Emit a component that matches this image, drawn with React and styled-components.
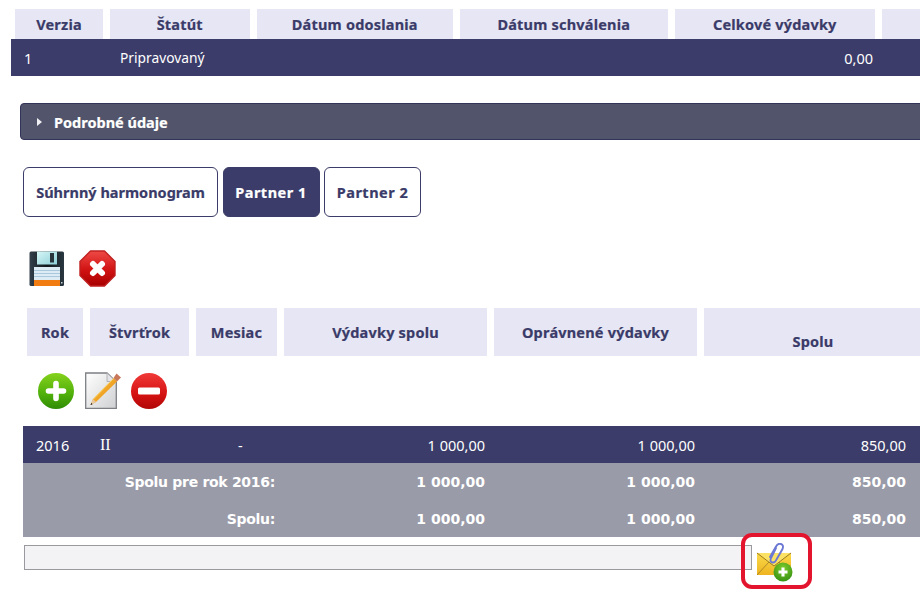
import React from 'react';
import styled, { createGlobalStyle } from 'styled-components';

const GlobalStyle = createGlobalStyle`
  html, body {
    margin: 0;
    padding: 0;
    background: #ffffff;
    overflow: hidden;
  }
  body {
    font-family: 'Noto Sans', Tahoma, sans-serif;
    font-size: 14.5px;
  }
`;

const SaveIcon = () => (
  <svg width="36" height="36" viewBox="0 0 36 36">
    <defs>
      <linearGradient id="saveBody" x1="0" y1="0" x2="1" y2="0">
        <stop offset="0" stopColor="#33404a" />
        <stop offset="0.5" stopColor="#10171c" />
        <stop offset="1" stopColor="#2b3841" />
      </linearGradient>
      <linearGradient id="saveShutter" x1="0" y1="0" x2="1" y2="1">
        <stop offset="0" stopColor="#d6f6f6" />
        <stop offset="1" stopColor="#8fd0d8" />
      </linearGradient>
    </defs>
    <path d="M2 0.5H33.5Q35 0.5 35 2V33.5Q35 35 33.5 35H2Q0.5 35 0.5 33.5V2Q0.5 0.5 2 0.5Z" fill="url(#saveBody)" />
    <rect x="8" y="0.5" width="20" height="13" fill="url(#saveShutter)" />
    <rect x="21" y="2" width="4" height="9.5" fill="#27343c" />
    <rect x="5" y="16" width="26" height="13" fill="#dcebf4" />
    <path d="M5 19.5H31M5 22.5H31M5 25.5H31" stroke="#a9c8dc" strokeWidth="1" />
    <rect x="5" y="29" width="26" height="6" fill="#f07c12" />
    <rect x="32" y="31" width="1.5" height="1.5" fill="#c8d0d4" />
  </svg>
);

const StopIcon = () => (
  <svg width="37" height="37" viewBox="0 0 37 37">
    <defs>
      <linearGradient id="stopFill" x1="0" y1="0" x2="0" y2="1">
        <stop offset="0" stopColor="#ee4a46" />
        <stop offset="0.55" stopColor="#d01212" />
        <stop offset="1" stopColor="#a80000" />
      </linearGradient>
    </defs>
    <path d="M11.5 1H25.5L36 11.5V25.5L25.5 36H11.5L1 25.5V11.5Z" fill="url(#stopFill)" stroke="#c02020" strokeWidth="1.4" strokeLinejoin="round" />
    <path d="M14 14L23 23M23 14L14 23" stroke="#ffffff" strokeWidth="6" strokeLinecap="round" />
  </svg>
);

const PlusIcon = () => (
  <svg width="36" height="36" viewBox="0 0 36 36">
    <defs>
      <linearGradient id="plusFill" x1="0" y1="0" x2="0" y2="1">
        <stop offset="0" stopColor="#84d21c" />
        <stop offset="0.6" stopColor="#4eae0a" />
        <stop offset="1" stopColor="#2f8c06" />
      </linearGradient>
    </defs>
    <circle cx="18" cy="18" r="18" fill="url(#plusFill)" />
    <path d="M18 10.5V25.5M10.5 18H25.5" stroke="#ffffff" strokeWidth="5.6" strokeLinecap="round" />
  </svg>
);

const MinusIcon = () => (
  <svg width="36" height="36" viewBox="0 0 36 36">
    <defs>
      <linearGradient id="minusFill" x1="0" y1="0" x2="0" y2="1">
        <stop offset="0" stopColor="#f03a38" />
        <stop offset="0.6" stopColor="#d41212" />
        <stop offset="1" stopColor="#b00606" />
      </linearGradient>
    </defs>
    <circle cx="18" cy="18" r="18" fill="url(#minusFill)" />
    <rect x="7" y="14.5" width="22" height="7" rx="1.5" fill="#ffffff" />
  </svg>
);

const EditIcon = () => (
  <svg width="36" height="38" viewBox="0 0 36 38">
    <defs>
      <linearGradient id="paperFill" x1="0" y1="0" x2="1" y2="1">
        <stop offset="0" stopColor="#ffffff" />
        <stop offset="1" stopColor="#cfd0d2" />
      </linearGradient>
      <linearGradient id="pencilFill" x1="0" y1="0" x2="1" y2="1">
        <stop offset="0" stopColor="#f8c840" />
        <stop offset="1" stopColor="#e8840e" />
      </linearGradient>
    </defs>
    <path d="M0.7 1H22L31.3 10V36.4H0.7Z" fill="url(#paperFill)" stroke="#7c7f84" strokeWidth="1.3" />
    <path d="M22 1V9.5H31Z" fill="#e4e4e8" stroke="#a4a6aa" strokeWidth="0.8" />
    <path d="M28.5 6L32 9.5L11 30L5.5 33L8 27Z" fill="url(#pencilFill)" />
    <path d="M8 27L5.5 33L11 30Z" fill="#e8c8a0" />
    <path d="M6.3 31L5.5 33L7.6 32.2Z" fill="#111111" />
    <path d="M28.5 6L31.5 1.5L36 5.5L32 9.5Z" fill="#c87858" />
    <path d="M8.5 27L28.5 6.5" stroke="#fbe08c" strokeWidth="0.8" />
  </svg>
);

const AttachIcon = () => (
  <svg width="37" height="39" viewBox="0 0 37 39">
    <defs>
      <linearGradient id="envFill" x1="0" y1="0" x2="0" y2="1">
        <stop offset="0" stopColor="#fada4c" />
        <stop offset="1" stopColor="#eeb420" />
      </linearGradient>
      <radialGradient id="badgeFill" cx="0.5" cy="0.3" r="0.8">
        <stop offset="0" stopColor="#7ccc2c" />
        <stop offset="1" stopColor="#2f8a10" />
      </radialGradient>
    </defs>
    <rect x="0" y="10" width="34" height="22" fill="url(#envFill)" />
    <path d="M0 10L17 23L34 10" fill="#fbe264" stroke="#9a7a20" strokeWidth="1" />
    <path d="M0 32L12 19M34 32L22 19" stroke="#a88424" strokeWidth="0.9" fill="none" />
    <path d="M19 5L14 15Q12.5 19 15.5 19.5Q18 20 19.5 16.5L25.5 6Q27 2 24 1Q21 0 19 3.5L13 14" fill="none" stroke="#6c78d4" strokeWidth="1.9" strokeLinecap="round" />
    <circle cx="26" cy="29" r="9.5" fill="url(#badgeFill)" />
    <path d="M26 24.5V33.5M21.5 29H30.5" stroke="#ffffff" strokeWidth="3.1" />
  </svg>
);

const App = () => {
  return (
    <Page>
      <GlobalStyle />
      <TopHead>
        <HeadCell>Verzia</HeadCell>
        <HeadCell>Štatút</HeadCell>
        <HeadCell>Dátum odoslania</HeadCell>
        <HeadCell>Dátum schválenia</HeadCell>
        <HeadCell>Celkové výdavky</HeadCell>
        <HeadCell />
      </TopHead>
      <TopRow>
        <span>1</span>
        <Status>Pripravovaný</Status>
        <span />
        <span />
        <Amount>0,00</Amount>
      </TopRow>

      <DetailBar>
        <Arrow />
        Podrobné údaje
      </DetailBar>

      <Tabs>
        <Tab $width={195}>Súhrnný harmonogram</Tab>
        <PartnerTab $width={97} $active>Partner 1</PartnerTab>
        <PartnerTab $width={97}>Partner 2</PartnerTab>
      </Tabs>

      <SaveTools>
        <SaveIcon />
        <StopIcon />
      </SaveTools>

      <PlanHead>
        <PlanCell>Rok</PlanCell>
        <PlanCell>Štvrťrok</PlanCell>
        <PlanCell>Mesiac</PlanCell>
        <PlanCell>Výdavky spolu</PlanCell>
        <PlanCell>Oprávnené výdavky</PlanCell>
        <PlanCell $low>Spolu</PlanCell>
      </PlanHead>

      <RowTools>
        <PlusIcon />
        <EditIcon />
        <MinusIcon />
      </RowTools>

      <PlanRow>
        <span>2016</span>
        <Roman>II</Roman>
        <Dash>-</Dash>
        <Amount>1 000,00</Amount>
        <Amount>1 000,00</Amount>
        <Amount>850,00</Amount>
      </PlanRow>
      <SumRows>
        <SumRow>
          <SumLabel>Spolu pre rok 2016:</SumLabel>
          <SumAmount>1 000,00</SumAmount>
          <SumAmount>1 000,00</SumAmount>
          <SumAmount>850,00</SumAmount>
        </SumRow>
        <SumRow>
          <SumLabel>Spolu:</SumLabel>
          <SumAmount>1 000,00</SumAmount>
          <SumAmount>1 000,00</SumAmount>
          <SumAmount>850,00</SumAmount>
        </SumRow>
      </SumRows>

      <AttachRow>
        <AttachInput />
        <AttachButton>
          <AttachIcon />
          <Highlight />
        </AttachButton>
      </AttachRow>
    </Page>
  );
};

export default App;

const Page = styled.div`
  width: 920px;
  height: 596px;
  padding-top: 9px;
  box-sizing: border-box;
  overflow: hidden;
`;

const TopHead = styled.div`
  display: grid;
  grid-template-columns: 88px 139.5px 196.5px 207.5px 200.5px 60px;
  column-gap: 7px;
  margin-left: 15px;
  height: 30px;
`;

const HeadCell = styled.div`
  display: flex;
  align-items: center;
  justify-content: center;
  background: #e6e6f5;
  color: #3a3b68;
  font-weight: 700;
  font-size: 14.5px;
  letter-spacing: 0.2px;
  -webkit-text-stroke: 0.2px #3a3b68;
`;

const TopRow = styled.div`
  display: grid;
  grid-template-columns: 88px 139.5px 196.5px 207.5px 189.5px;
  column-gap: 7px;
  align-items: center;
  height: 37px;
  margin-left: 11px;
  padding-left: 13px;
  background: #3b3c69;
  color: #ffffff;
`;

const Status = styled.span`
  margin-left: 1px;
  font-size: 13.8px;
`;

const Amount = styled.span`
  text-align: right;
`;

const DetailBar = styled.div`
  display: flex;
  align-items: center;
  gap: 12px;
  height: 37px;
  margin: 27px -4px 0 20px;
  padding-left: 16px;
  box-sizing: border-box;
  background: #51546a;
  border: 1px solid #33345a;
  border-radius: 4px;
  color: #ffffff;
  font-weight: 700;
  font-size: 14.5px;
  -webkit-text-stroke: 0.2px #ffffff;
`;

const Arrow = styled.span`
  width: 0;
  height: 0;
  border-left: 5px solid #f0f0f4;
  border-top: 4px solid transparent;
  border-bottom: 4px solid transparent;
`;

const Tabs = styled.div`
  display: flex;
  gap: 4.5px;
  margin: 27px 0 0 23px;
`;

const Tab = styled.div`
  display: flex;
  align-items: center;
  justify-content: center;
  flex: none;
  width: ${(props) => props.$width}px;
  height: 50px;
  box-sizing: border-box;
  border: 1px solid #3b3c69;
  border-radius: 6px;
  background: ${(props) => (props.$active ? '#3b3c69' : '#ffffff')};
  color: ${(props) => (props.$active ? '#ffffff' : '#3a3b68')};
  font-weight: 700;
  font-size: 14.5px;
  -webkit-text-stroke: 0.2px ${(props) => (props.$active ? '#ffffff' : '#3a3b68')};
`;

const PartnerTab = styled(Tab)`
  letter-spacing: 0.5px;
`;

const SaveTools = styled.div`
  display: flex;
  align-items: center;
  gap: 14px;
  height: 37px;
  margin: 33px 0 0 29px;
`;

const PlanHead = styled.div`
  display: grid;
  grid-template-columns: 56px 99px 81px 203px 203px 230px;
  column-gap: 7px;
  height: 48px;
  margin: 21px 0 0 27px;
`;

const PlanCell = styled.div`
  display: flex;
  align-items: center;
  justify-content: center;
  padding-top: ${(props) => (props.$low ? '18px' : '0')};
  padding-right: ${(props) => (props.$low ? '12px' : '0')};
  box-sizing: border-box;
  background: #e6e6f5;
  color: #3a3b68;
  font-weight: 700;
  font-size: 14.5px;
  letter-spacing: 0.2px;
  -webkit-text-stroke: 0.2px #3a3b68;
`;

const RowTools = styled.div`
  display: flex;
  align-items: center;
  gap: 10.5px;
  height: 38px;
  margin: 16px 0 0 38px;
`;

const PlanRow = styled.div`
  display: grid;
  grid-template-columns: 64px 106px 76px 203px 210px 211px;
  align-items: center;
  height: 37px;
  margin: 16px 0 0 23px;
  padding-left: 13px;
  background: #3b3c69;
  color: #ffffff;
`;

const Roman = styled.span`
  font-family: 'Liberation Serif', serif;
  font-size: 16px;
`;

const Dash = styled.span`
  padding-left: 32px;
`;

const SumRows = styled.div`
  display: flex;
  flex-direction: column;
  margin-left: 23px;
  background: #9a9ba8;
  height: 74px;
`;

const SumRow = styled.div`
  display: grid;
  grid-template-columns: 252px 210px 210px 211px;
  align-items: center;
  height: 37px;
  color: #ffffff;
  font-family: 'DejaVu Sans', sans-serif;
  font-weight: 700;
  font-size: 14px;
`;

const SumLabel = styled.span`
  text-align: right;
  letter-spacing: -0.3px;
`;

const SumAmount = styled.span`
  text-align: right;
`;

const AttachRow = styled.div`
  display: flex;
  align-items: flex-start;
  margin: 6px 0 0 24px;
`;

const AttachInput = styled.div`
  width: 728px;
  height: 25px;
  margin-top: 2px;
  box-sizing: border-box;
  background: #f3f3f6;
  border: 1px solid #9a9a9e;
`;

const AttachButton = styled.div`
  position: relative;
  margin: 0 0 0 5px;
  width: 37px;
  height: 39px;
`;

const Highlight = styled.span`
  position: absolute;
  left: -16px;
  top: -10px;
  width: 71px;
  height: 56px;
  box-sizing: border-box;
  border: 4px solid #e3142d;
  border-radius: 11px;
`;
